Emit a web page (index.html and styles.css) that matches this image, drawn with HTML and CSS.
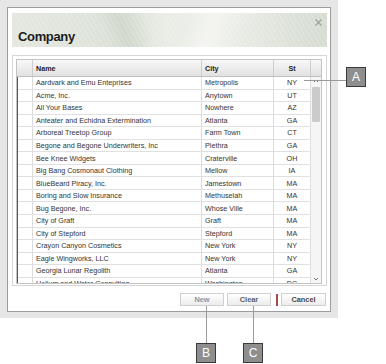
FILE: index.html
```html
<!DOCTYPE html>
<html>
<head>
<meta charset="utf-8">
<link rel="stylesheet" href="styles.css">
</head>
<body>
<div class="page">
  <div class="stage">
    <div class="dialog">
      <div class="dheader">
        <span class="title">Company</span>
        <svg class="close" width="7" height="7" viewBox="0 0 7 7"><path d="M0.5 0.5L6.5 6.5M6.5 0.5L0.5 6.5" stroke="#a0a0a0" stroke-width="1.2"/></svg>
      </div>
      <div class="frame">
        <div class="grid">
          <div class="ghead">
            <div class="hc"></div>
            <div class="hc name">Name</div>
            <div class="hc">City</div>
            <div class="hc st">St</div>
            <div class="hc last"></div>
          </div>
          <div class="gbody">
            <div class="rows">
              <div class="row"><div class="c ind"></div><div class="c">Aardvark and Emu Enteprises</div><div class="c">Metropolis</div><div class="c st">NY</div></div>
              <div class="row"><div class="c ind"></div><div class="c">Acme, Inc.</div><div class="c">Anytown</div><div class="c st">UT</div></div>
              <div class="row"><div class="c ind"></div><div class="c">All Your Bases</div><div class="c">Nowhere</div><div class="c st">AZ</div></div>
              <div class="row"><div class="c ind"></div><div class="c">Anteater and Echidna Extermination</div><div class="c">Atlanta</div><div class="c st">GA</div></div>
              <div class="row"><div class="c ind"></div><div class="c">Arboreal Treetop Group</div><div class="c">Farm Town</div><div class="c st">CT</div></div>
              <div class="row"><div class="c ind"></div><div class="c">Begone and Begone Underwriters, Inc</div><div class="c">Plethra</div><div class="c st">GA</div></div>
              <div class="row"><div class="c ind"></div><div class="c">Bee Knee Widgets</div><div class="c">Craterville</div><div class="c st">OH</div></div>
              <div class="row"><div class="c ind"></div><div class="c">Big Bang Cosmonaut Clothing</div><div class="c">Mellow</div><div class="c st">IA</div></div>
              <div class="row"><div class="c ind"></div><div class="c">BlueBeard Piracy, Inc.</div><div class="c">Jamestown</div><div class="c st">MA</div></div>
              <div class="row"><div class="c ind"></div><div class="c">Boring and Slow Insurance</div><div class="c">Methuselah</div><div class="c st">MA</div></div>
              <div class="row"><div class="c ind"></div><div class="c">Bug Begone, Inc.</div><div class="c">Whose Ville</div><div class="c st">MA</div></div>
              <div class="row"><div class="c ind"></div><div class="c">City of Graft</div><div class="c">Graft</div><div class="c st">MA</div></div>
              <div class="row"><div class="c ind"></div><div class="c">City of Stepford</div><div class="c">Stepford</div><div class="c st">MA</div></div>
              <div class="row"><div class="c ind"></div><div class="c">Crayon Canyon Cosmetics</div><div class="c">New York</div><div class="c st">NY</div></div>
              <div class="row"><div class="c ind"></div><div class="c">Eagle Wingworks, LLC</div><div class="c">New York</div><div class="c st">NY</div></div>
              <div class="row"><div class="c ind"></div><div class="c">Georgia Lunar Regolith</div><div class="c">Atlanta</div><div class="c st">GA</div></div>
              <div class="row"><div class="c ind"></div><div class="c">Helium and Water Consulting</div><div class="c">Washington</div><div class="c st">DC</div></div>
            </div>
            <div class="vscroll">
              <svg class="arrow" width="10" height="8" viewBox="0 0 10 8"><path d="M3 5L5 3L7 5" fill="none" stroke="#777" stroke-width="1"/></svg>
              <div class="thumb"></div>
              <div class="spacer"></div>
              <svg class="arrow" width="10" height="8" viewBox="0 0 10 8"><path d="M3 3L5 5L7 3" fill="none" stroke="#777" stroke-width="1"/></svg>
            </div>
          </div>
        </div>
      </div>
      <div class="buttons">
        <div class="btn disabled">New</div>
        <div class="btn clear">Clear</div>
        <div class="sep"></div>
        <div class="btn cancel">Cancel</div>
      </div>
    </div>
  </div>

  <div class="callout line-a"></div>
  <div class="tag tag-a">A</div>
  <div class="callout line-b"></div>
  <div class="tag tag-b">B</div>
  <div class="callout line-c"></div>
  <div class="tag tag-c">C</div>
</div>
</body>
</html>
```

FILE: styles.css
```css
html, body {
  margin: 0;
  padding: 0;
  background: #ffffff;
}
.page {
  position: relative;
  width: 386px;
  height: 364px;
  font-family: "Liberation Sans", Arial, sans-serif;
}
.stage {
  width: 338px;
  height: 318px;
  box-sizing: border-box;
  padding: 7px 7px 6px 7px;
  background: #e6e6e6;
}
.dialog {
  width: 324px;
  height: 305px;
  box-sizing: border-box;
  border: 1px solid #9c9c9c;
  background: #ffffff;
  padding: 5px 3px 5px 4px;
  display: flex;
  flex-direction: column;
}
.dheader {
  height: 34px;
  display: flex;
  align-items: flex-end;
  justify-content: space-between;
  padding: 0 5px 3px 6px;
  box-sizing: border-box;
  background:
    repeating-linear-gradient(60deg, rgba(255,255,255,0) 0px, rgba(255,255,255,0) 3px, rgba(255,255,255,0.18) 3px, rgba(255,255,255,0.18) 4px),
    linear-gradient(115deg, rgba(255,255,255,0) 55%, rgba(255,255,255,0.35) 62%, rgba(255,255,255,0) 75%),
    linear-gradient(65deg, rgba(0,0,0,0) 30%, rgba(90,110,80,0.07) 36%, rgba(0,0,0,0) 44%),
    linear-gradient(90deg, #e3e7df 0%, #dfe4db 25%, #d9dfd4 36%, #e9ece5 48%, #edefe9 62%, #e4e8e0 78%, #d6dcd1 100%);
}
.title {
  font-weight: bold;
  font-size: 13px;
  letter-spacing: -0.35px;
  color: #1c1c1c;
  line-height: 14px;
}
.close {
  align-self: flex-start;
  margin-top: 6px;
}
.frame {
  margin-top: 8px;
  width: 315px;
  box-sizing: border-box;
  border: 1px solid #d6d6d6;
  padding: 3px 4px 1px 3px;
}
.grid {
  width: 306px;
  border: 1px solid #c4c4c4;
  box-sizing: border-box;
  font-size: 7.2px;
  color: #333;
}
.ghead {
  display: grid;
  grid-template-columns: 16px 169px 72px 37px 10px;
  height: 16px;
  border-bottom: 1px solid #c0c0c0;
  background: linear-gradient(#f8f8f8, #e2e2e2);
}
.hc {
  border-right: 1px solid #cdcdcd;
  font-weight: bold;
  color: #222;
  display: flex;
  align-items: center;
  padding-left: 3px;
  box-sizing: border-box;
}
.hc.st {
  justify-content: center;
  padding-left: 0;
}
.hc.last {
  border-right: none;
}
.gbody {
  display: flex;
  height: 206px;
}
.rows {
  width: 294px;
  overflow: hidden;
  border-left: 1px solid #555;
  margin-left: 0;
}
.row {
  display: grid;
  grid-template-columns: 15px 169px 72px 37px;
  height: 12.55px;
  box-sizing: border-box;
  border-bottom: 1px solid #e0e0e0;
}
.c {
  border-right: 1px solid #dcdcdc;
  padding-left: 3px;
  display: flex;
  align-items: center;
  white-space: nowrap;
  overflow: hidden;
  box-sizing: border-box;
}
.c.ind {
  padding: 0;
}
.c.st {
  justify-content: center;
  padding-left: 0;
}
.vscroll {
  width: 10px;
  background: #f5f5f5;
  display: flex;
  flex-direction: column;
  align-items: center;
}
.arrow {
  display: block;
  flex: none;
}
.thumb {
  margin-top: 2px;
  width: 8px;
  height: 35px;
  background: #cbcbcb;
  border-radius: 1px;
}
.spacer {
  flex: 1;
}
.buttons {
  margin-top: 7px;
  display: flex;
  justify-content: flex-end;
  align-items: center;
  height: 13px;
  padding-right: 1px;
}
.btn {
  height: 13px;
  box-sizing: border-box;
  border: 1px solid #d0d0d0;
  background: linear-gradient(#ffffff, #ececec);
  font-size: 7.4px;
  font-weight: bold;
  display: flex;
  align-items: center;
  justify-content: center;
  width: 44px;
  margin-left: 3px;
}
.btn.disabled {
  color: #8a96a4;
}
.btn.clear {
  color: #5c5c5c;
}
.btn.cancel {
  color: #4a4a4a;
  width: 45px;
  margin-left: 3px;
}
.sep {
  width: 2px;
  height: 12px;
  background: #a84848;
  margin-left: 5px;
}
.callout {
  position: absolute;
  background: #9a9a9a;
}
.line-a {
  left: 304px;
  top: 80px;
  width: 42px;
  height: 1px;
}
.line-b {
  left: 206px;
  top: 306px;
  width: 1px;
  height: 37px;
}
.line-c {
  left: 253px;
  top: 306px;
  width: 1px;
  height: 37px;
}
.tag {
  position: absolute;
  width: 20px;
  height: 20px;
  box-sizing: border-box;
  border: 1px solid #3a3a3a;
  background: #8e8e8e;
  color: #ffffff;
  font-size: 12px;
  display: flex;
  align-items: center;
  justify-content: center;
}
.tag-a {
  left: 346px;
  top: 67px;
}
.tag-b {
  left: 196px;
  top: 343px;
}
.tag-c {
  left: 243px;
  top: 343px;
}
```
